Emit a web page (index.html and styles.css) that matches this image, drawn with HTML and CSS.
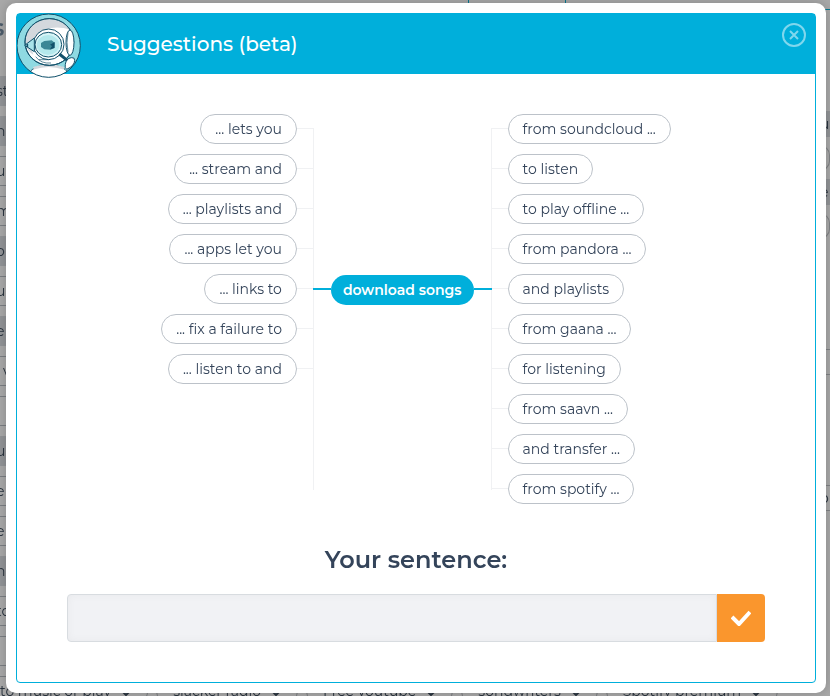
FILE: index.html
```html
<!DOCTYPE html>
<html lang="en">
<head>
<meta charset="utf-8">
<title>Suggestions (beta)</title>
<link rel="stylesheet" href="styles.css">
</head>
<body>
<div class="backdrop" aria-hidden="true">
  <div class="tabs"><span class="tabs-title">s</span><i class="tab"></i></div>
  <div class="columns">
    <ul class="terms">
      <li class="filled">st</li>
      <li class="filled">n</li>
      <li>u</li>
      <li>m</li>
      <li class="filled">o</li>
      <li>u</li>
      <li class="filled">e</li>
      <li class="indent">v</li>
      <li></li>
      <li class="filled">us</li>
      <li>e</li>
      <li>e</li>
      <li class="filled">n</li>
      <li>to</li>
      <li></li>
    </ul>
    <ul class="side">
      <li class="filled">u</li>
      <li class="round"></li>
      <li class="filled">e</li>
      <li class="round"></li>
      <li class="spaced"></li>
      <li class="spaced">o</li>
    </ul>
  </div>
  <div class="chips">
    <span class="chip first">to music or play<svg viewBox="0 0 10 6"><path d="M1 1l4 4 4-4"/></svg></span>
    <span class="chip">slacker radio<svg viewBox="0 0 10 6"><path d="M1 1l4 4 4-4"/></svg></span>
    <span class="chip">Free youtube<svg viewBox="0 0 10 6"><path d="M1 1l4 4 4-4"/></svg></span>
    <span class="chip">songwriters<svg viewBox="0 0 10 6"><path d="M1 1l4 4 4-4"/></svg></span>
    <span class="chip">Spotify premium<svg viewBox="0 0 10 6"><path d="M1 1l4 4 4-4"/></svg></span>
  </div>
</div>

<main class="modal" role="dialog" aria-labelledby="title">
  <div class="panel">
    <header class="header">
      <svg class="avatar" viewBox="51 38 195 195" aria-hidden="true">
        <defs><clipPath id="disc"><circle cx="146" cy="136" r="95"/></clipPath></defs>
        <circle cx="146" cy="136" r="95" fill="#8fdae2"/>
        <g clip-path="url(#disc)" stroke="#12506a" stroke-width="3">
          <path d="M92 212c12-12 30-18 54-18s44 6 54 18l-8 30H100z" fill="#fff"/>
          <path d="M100 204q46-16 92 0" fill="none" stroke="#d3d8dd" stroke-width="8"/>
          <ellipse cx="148" cy="125" rx="73" ry="70" fill="#fff"/>
          <path d="M77 125C77 82 108 57 148 57c28 0 50 12 62 32-42-16-82-3-101 17-12 13-16 35-9 57-14-8-23-22-23-38z" fill="#d3d8dd" stroke="none"/>
          <ellipse cx="148" cy="125" rx="73" ry="70" fill="none"/>
          <ellipse cx="210" cy="127" rx="12" ry="38" fill="#fff"/>
          <path d="M204 97q-6 29 0 59" fill="none" stroke-width="2"/>
          <circle cx="146" cy="132" r="46" fill="#fff"/>
          <path d="M74 135l29-22v41z" fill="#a8e4ea"/>
          <path d="M82 131v9" stroke-width="5"/>
          <ellipse cx="145" cy="133" rx="40" ry="37" fill="#d8f5f7"/>
          <ellipse cx="144" cy="134" rx="34" ry="30" fill="#b4e8ec" stroke="none"/>
          <path d="M123 128l10-6 22-2 9 7-2 16-10 5-19-1-10-7z" fill="#3c8796" stroke="none"/>
          <path d="M164 125v18l-14 4 6-10-6-4z" fill="#12506a" stroke="none"/>
          <path d="M116 178h30M107 169q16 22 46 19" fill="none" stroke-width="2"/>
          <path d="M196 192q2-18 18-20 10-2 10 8 0 16-24 27-7-5-4-15z" fill="#fff"/>
          <path d="M178 161l24 19" stroke-width="9"/>
        </g>
        <circle cx="146" cy="136" r="95" fill="none" stroke="#12506a" stroke-width="3"/>
      </svg>
      <h1 class="title" id="title">Suggestions (beta)</h1>
      <button class="close" type="button" aria-label="Close">
        <svg viewBox="0 0 24 24"><circle cx="12" cy="12" r="11"/><path d="M8 8l8 8M16 8l-8 8"/></svg>
      </button>
    </header>

    <div class="content">
      <div class="map">
        <ul class="branch before">
          <li><button type="button">... lets you</button></li>
          <li><button type="button">... stream and</button></li>
          <li><button type="button">... playlists and</button></li>
          <li><button type="button">... apps let you</button></li>
          <li><button type="button">... links to</button></li>
          <li><button type="button">... fix a failure to</button></li>
          <li><button type="button">... listen to and</button></li>
        </ul>
        <div class="trunk"><strong class="keyword">download songs</strong></div>
        <ul class="branch after">
          <li><button type="button">from soundcloud ...</button></li>
          <li><button type="button">to listen</button></li>
          <li><button type="button">to play offline ...</button></li>
          <li><button type="button">from pandora ...</button></li>
          <li><button type="button">and playlists</button></li>
          <li><button type="button">from gaana ...</button></li>
          <li><button type="button">for listening</button></li>
          <li><button type="button">from saavn ...</button></li>
          <li><button type="button">and transfer ...</button></li>
          <li><button type="button">from spotify ...</button></li>
        </ul>
      </div>

      <form class="sentence">
        <label class="label" for="sentence">Your sentence:</label>
        <div class="field">
          <input class="input" id="sentence" type="text">
          <button class="submit" type="button" aria-label="Confirm">
            <svg viewBox="0 0 20 16"><path d="M1 7l7 7L19 2"/></svg>
          </button>
        </div>
      </form>
    </div>
  </div>
</main>
</body>
</html>
```
FILE: styles.css
```css
* { box-sizing: border-box; }

body {
  margin: 0;
  min-height: 100vh;
  padding: 3px 4px 3px 6px;
  display: flex;
  overflow: hidden;
  background: #a9a9a9;
  color: #34445a;
  font: 14px/20px Montserrat, Inter, sans-serif;
}

ul { margin: 0; padding: 0; list-style: none; }
button { font: inherit; color: inherit; cursor: pointer; }

/* Dimmed page behind the dialog */
.backdrop {
  position: fixed;
  inset: 0;
  overflow: hidden;
  color: #29333e;
}
.tabs { display: flex; height: 76px; }
.tabs-title {
  width: 468px;
  padding-top: 18px;
  text-indent: -8px;
  font-size: 24px;
  font-weight: 600;
  color: #4d5c6b;
}
.tab {
  width: 98px;
  height: 8px;
  border: solid #087790;
  border-width: 0 1px;
}
.tabs::after {
  content: "";
  flex: 1;
  height: 9px;
  border-bottom: 1px solid #087790;
}
.columns { display: flex; justify-content: space-between; height: 600px; }
.terms { display: grid; gap: 10px; grid-auto-rows: 30px; width: 40px; }
.terms li {
  border: solid #7b7e82;
  border-width: 1px 0;
  line-height: 28px;
  text-indent: -4px;
}
.terms .indent { text-indent: 3px; }
.terms .filled, .side .filled { background: #929497; border-color: transparent; }
.side { width: 10px; padding-top: 35px; }
.side li {
  height: 26px;
  margin-bottom: 8px;
  border: solid #808285;
  border-width: 1px 0;
  line-height: 24px;
}
.side .round { border-width: 1px; border-radius: 0 13px 13px 0; }
.side .spaced { margin-top: 110px; }
.chips { display: flex; gap: 8px; white-space: nowrap; }
.chip {
  height: 30px;
  padding: 0 16px;
  border: 1px solid #7b7e82;
  border-radius: 15px;
  line-height: 28px;
}
.first { padding-left: 0; border-left: 0; border-radius: 0 15px 15px 0; }
.chip svg {
  width: 10px;
  height: 6px;
  margin-left: 10px;
  fill: none;
  stroke: #29333e;
  stroke-width: 2;
}

/* Dialog */
.modal {
  position: relative;
  flex: 1;
  display: flex;
  padding: 10px;
  border-radius: 10px;
  background: #fff;
  box-shadow: 0 0 12px rgba(0, 0, 0, .2);
}
.panel {
  flex: 1;
  border: 1px solid #00afdb;
  border-radius: 4px;
}
.header {
  display: flex;
  align-items: center;
  height: 60px;
  padding-right: 9px;
  background: #00afdb;
  color: #fff;
}
.avatar { width: 65px; height: 65px; margin: 2px 25px 0 0; }
.title { flex: 1; margin: 0; font-size: 20px; line-height: 28px; font-weight: 500; }
.close {
  align-self: flex-start;
  width: 24px;
  height: 24px;
  margin-top: 9px;
  padding: 0;
  border: 0;
  background: none;
}
.close svg { display: block; fill: none; stroke: #80d7ed; stroke-width: 2; }
.content { padding: 40px 50px; }

/* Phrase map */
.map { display: flex; justify-content: center; }
.branch { display: grid; gap: 10px; grid-auto-rows: 30px; align-content: start; }
.branch li { display: flex; }
.branch button {
  height: 30px;
  padding: 0 14px;
  border: 1px solid #bcc2c9;
  border-radius: 15px;
  background: #fff;
  white-space: nowrap;
}
.before li { justify-content: flex-end; }
.before li::after, .after li::before {
  content: "";
  width: 16px;
  height: 1px;
  margin-top: 14px;
  background: #f0f1f3;
}
.trunk {
  margin: 14px 0;
  padding: 147px 17px 0;
  border: solid #f0f1f3;
  border-width: 0 1px;
}
.keyword {
  position: relative;
  display: block;
  padding: 0 12px;
  border-radius: 15px;
  background: #00afdb;
  color: #fff;
  font-weight: 600;
  line-height: 30px;
  white-space: nowrap;
}
.keyword::before, .keyword::after {
  content: "";
  position: absolute;
  top: 13px;
  width: 18px;
  height: 2px;
  background: #00afdb;
}
.keyword::before { right: 100%; }
.keyword::after { left: 100%; }

/* Sentence form */
.sentence { padding-top: 40px; }
.label {
  display: block;
  margin-bottom: 18px;
  font-size: 24px;
  line-height: 32px;
  font-weight: 600;
  text-align: center;
}
.field { display: flex; height: 48px; }
.input {
  flex: 1;
  min-width: 0;
  padding: 0 14px;
  border: 1px solid #d8dce0;
  border-radius: 4px 0 0 4px;
  background: #f1f2f5;
  box-shadow: inset 0 0 8px rgba(0, 0, 0, .04);
  font: inherit;
}
.submit {
  display: grid;
  place-items: center;
  width: 48px;
  padding: 0;
  border: 0;
  border-radius: 0 4px 4px 0;
  background: #fa962d;
}
.submit svg { width: 20px; height: 16px; fill: none; stroke: #fff; stroke-width: 4; }
```
